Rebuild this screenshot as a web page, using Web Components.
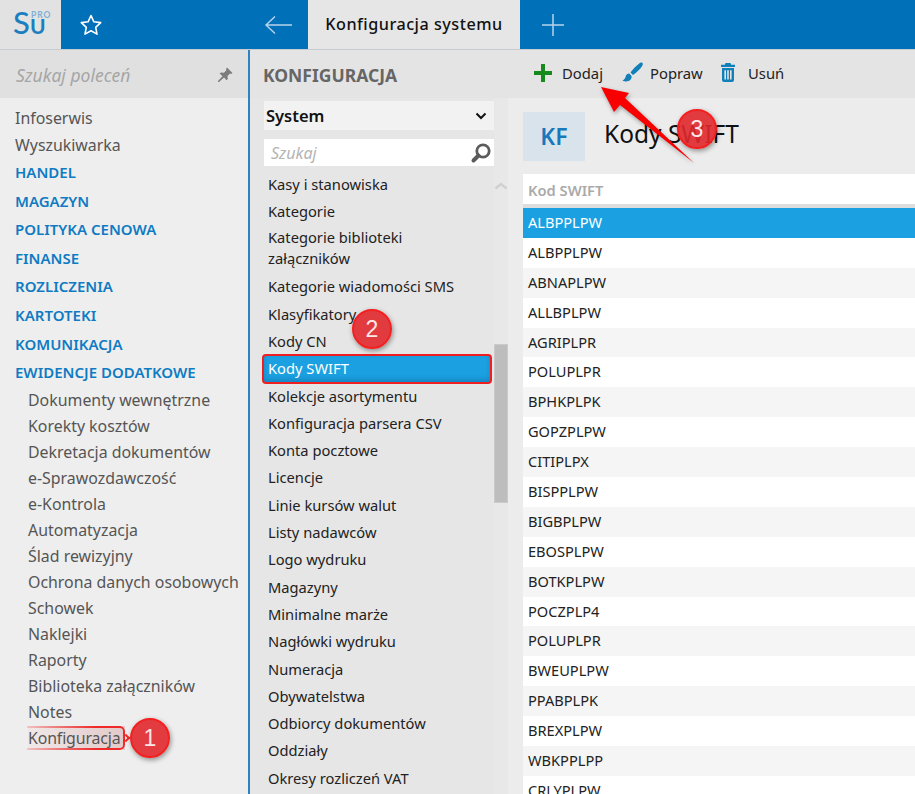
<!DOCTYPE html>
<html lang="pl">
<head>
<meta charset="UTF-8">
<title>Konfiguracja systemu</title>
<style>
    html, body { margin: 0; height: 794px; overflow: hidden; }
    body { font-family: "Noto Sans", "Open Sans", sans-serif; background: #ececec; position: relative; }
    #app { display: grid; grid-template-columns: 250px 258px 1fr; grid-template-rows: 50px 744px; width: 915px; }
    su-topbar { grid-column: 1 / 4; }
</style>
</head>
<body>
<div id="app">
    <su-topbar></su-topbar>
    <su-nav></su-nav>
    <su-config></su-config>
    <su-detail></su-detail>
</div>
<step-badge n="1" style="left:130px;top:718px"></step-badge>
<step-badge n="2" style="left:352px;top:309px"></step-badge>
<step-badge n="3" style="left:677px;top:109px"></step-badge>
<red-arrow></red-arrow>

<template id="topbar-tpl">
    <style>
        :host { display: flex; height: 50px; box-sizing: border-box; border-bottom: 1px solid #c6ccd1; background: #0070b9; }
        .logo { width: 61px; background: #e2e2e2; display: flex; }
        .star { width: 185px; padding-left: 18px; display: flex; align-items: center; }
        .back { width: 28px; display: flex; align-items: center; padding-right: 16px; }
        .tab { width: 212px; background: #e6e6e6; color: #111; font-size: 16.200px; font-weight: 500; letter-spacing: .5px; display: flex; align-items: center; justify-content: center; padding-bottom: 2px; box-sizing: border-box; }
        .plus { padding-left: 22px; display: flex; align-items: center; }
    </style>
    <div class="logo">
        <svg width="61" height="49" viewBox="0 0 61 49">
            <text x="13" y="34" font-family="Lato, sans-serif" font-size="31" font-weight="500" fill="#1b7fc0">S</text>
            <text x="30" y="34" font-family="Lato, sans-serif" font-size="21" font-weight="700" fill="#1b7fc0">U</text>
            <text x="31" y="18" font-family="Lato, sans-serif" font-size="8.500" font-weight="700" letter-spacing=".9" fill="#7db0d4">PRO</text>
        </svg>
    </div>
    <div class="star">
        <svg width="24" height="24" viewBox="0 0 24 24" fill="none" stroke="#fff" stroke-width="1.600" stroke-linejoin="round">
            <path d="M12 2.500l2.900 6.300 6.800.8-5 4.700 1.300 6.800-6-3.400-6 3.400 1.300-6.800-5-4.700 6.800-.8z"/>
        </svg>
    </div>
    <div class="back">
        <svg width="28" height="20" viewBox="0 0 28 20" fill="none" stroke="#b5d3ea" stroke-width="1.500">
            <path d="M28 10H2M11 1.500L2 10l9 8.500"/>
        </svg>
    </div>
    <div class="tab">Konfiguracja systemu</div>
    <div class="plus">
        <svg width="22" height="22" viewBox="0 0 22 22" stroke="#b5d3ea" stroke-width="1.500"><path d="M11 0v22M0 11h22"/></svg>
    </div>
</template>

<template id="nav-tpl">
    <style>
        :host { display: flex; flex-direction: column; background: #eeeeee; border-right: 2px solid #2f82bf; box-sizing: border-box; overflow: hidden; }
        .search { height: 48px; flex: none; background: #e0e0e0; display: flex; align-items: center; justify-content: space-between; padding: 2px 14px 0 16px; box-sizing: border-box; font-style: italic; font-size: 17.500px; color: #a6a6a6; }
        .list { padding-top: 7px; font-size: 15.900px; color: #555; }
        .item { padding-left: 15px; line-height: 26.500px; height: 26.500px; }
        .sec { padding-left: 15px; height: 28.600px; line-height: 28.600px; color: #0f7bc3; font-weight: 600; font-size: 15px; }
        .sub { padding-left: 28px; height: 26px; line-height: 26px; white-space: nowrap; }
        .mark { display: inline-block; position: relative; line-height: 24px; padding-right: 5px; margin-top: 1px; letter-spacing: -.15px;
            background: linear-gradient(90deg, #f0e8e8, #e2c9c9); }
        .mark::before { content: ""; position: absolute; inset: 0 0 0 -1px; border: solid #f02a2a; border-width: 2px 2px 2px 0; border-radius: 0 5px 5px 0;
            -webkit-mask: linear-gradient(90deg, rgba(0,0,0,.2), #000 70%); mask: linear-gradient(90deg, rgba(0,0,0,.2), #000 70%); }
        .mark::after { content: ""; position: absolute; right: -4px; top: 9px; width: 6px; height: 6px; border: solid #f02a2a; border-width: 2px 2px 0 0; transform: rotate(45deg); box-sizing: border-box; }
    </style>
    <div class="search">
        <span>Szukaj poleceń</span>
        <svg width="18" height="18" viewBox="0 0 18 18" fill="#7d7d7d">
            <path d="M11 1.500l5.500 5.500-1.300 1-1.200-.4-2.500 2.500.3 3-1.200 1.200-2.600-2.800L3 16l-1 0 0-1 4.500-4.800-2.800-2.600 1.200-1.200 3 .3 2.500-2.500-.4-1.200z"/>
        </svg>
    </div>
    <div class="list"></div>
</template>

<template id="config-tpl">
    <style>
        :host { display: flex; flex-direction: column; background: #e4e4e4; overflow: hidden; }
        h2 { margin: 0; height: 48px; flex: none; box-sizing: border-box; padding: 2px 0 0 13px; display: flex; align-items: center; font-size: 17.500px; font-weight: 700; color: #666; }
        .body { flex: 1; display: flex; min-height: 0; background: #e6e6e6; }
        .col { width: 244px; flex: none; padding: 3px 0 0 14px; box-sizing: border-box; }
        .select { width: 230px; height: 29px; background: #f2f2f2; display: flex; align-items: center; justify-content: space-between; padding: 0 7px 0 2px; box-sizing: border-box; font-size: 16.500px; font-weight: 600; color: #111; }
        .find { width: 230px; height: 27px; margin-top: 9px; background: #fff; display: flex; align-items: center; justify-content: space-between; padding: 0 2px 0 7px; box-sizing: border-box; font-style: italic; font-size: 16px; color: #b4b4b4; }
        .items { margin: 5px 0 0 -2px; font-size: 14.700px; color: #222; }
        .row { padding-left: 6px; min-height: 27.300px; line-height: 27.300px; white-space: nowrap; }
        .row.two { line-height: 21px; padding: 1.500px 0 4.300px 6px; white-space: normal; width: 190px; }
        .row.on { background: #1ba1e2; color: #fff; width: 230px; box-sizing: border-box; height: 30px; margin: -1.350px 0; padding-left: 4px; line-height: 24px;
            border: 2px solid #f01f1f; border-radius: 4px; box-shadow: inset 0 -3px 5px rgba(0,60,110,.25); position: relative; }
        .bar { width: 14px; flex: none; position: relative; background: #e8e8e8; }
        .bar svg { position: absolute; top: 84px; left: 0; }
        .thumb { position: absolute; left: 0; top: 246px; width: 14px; height: 159px; box-sizing: border-box; background: #bdbdbd; border: 1px solid #cacaca; }
    </style>
    <h2>KONFIGURACJA</h2>
    <div class="body">
        <div class="col">
            <div class="select">System
                <svg width="12" height="8" viewBox="0 0 12 8" fill="none" stroke="#111" stroke-width="2"><path d="M1.500 1.500L6 6l4.500-4.500"/></svg>
            </div>
            <div class="find">Szukaj
                <svg width="22" height="22" viewBox="0 0 22 22" fill="none"><circle cx="13" cy="9" r="6.200" stroke="#5c5c5c" stroke-width="2.800"/><path d="M8.500 13.500L3.500 18.500" stroke="#5c5c5c" stroke-width="4" stroke-linecap="round"/></svg>
            </div>
            <div class="items"></div>
        </div>
        <div class="bar">
            <svg width="14" height="8" viewBox="0 0 14 8" fill="none" stroke="#d0d0d0" stroke-width="2.500"><path d="M1.500 6.500L7 2l5.500 4.500"/></svg>
            <div class="thumb"></div>
        </div>
    </div>
</template>

<template id="detail-tpl">
    <style>
        :host { display: flex; flex-direction: column; background: #ececec; overflow: hidden; min-width: 0; }
        .tools { height: 48px; flex: none; background: #e4e4e4; display: flex; align-items: center; padding: 0 0 3px 26px; box-sizing: border-box; font-size: 14.800px; color: #222; }
        .tools span { display: flex; align-items: center; }
        .head { display: flex; align-items: center; height: 76px; flex: none; padding-left: 15px; }
        .kf { width: 62px; height: 49px; background: #d8e3ec; color: #1878bb; font-size: 23px; font-weight: 600; display: flex; align-items: center; justify-content: center; }
        h1 { margin: 0 0 6px 19px; font-size: 24.500px; font-weight: 400; color: #111; }
        .table { margin-left: 15px; font-size: 14.600px; color: #222; }
        .th { height: 30px; line-height: 33px; background: #fff; padding-left: 5px; color: #aaa; font-weight: 600; font-size: 14.700px; border-bottom: 4px solid #dedede; }
        .tr { height: 29.900px; line-height: 29.500px; padding-left: 5px; background: #fff; }
        .tr:nth-child(odd) { background: #f5f5f5; }
        .tr.on { background: #1ba1e2; color: #fff; }
    </style>
    <div class="tools">
        <span style="width:28px"><svg width="18" height="18" viewBox="0 0 18 18" fill="#178a1e"><path d="M7 0h4v7h7v4h-7v7H7v-7H0V7h7z"/></svg></span>
        <span style="width:60px">Dodaj</span>
        <span style="width:28px"><svg width="21" height="21" viewBox="0 0 21 21" fill="#117fb8"><path d="M20.500 1c-.8-.9-2-.5-3 .2C14 3.800 10.500 7.500 8.500 10.500l2.500 2.500c3-2.200 7-5.500 9-8.800.6-1 1.200-2.300.5-3.200zM7.200 11.500c-2 .2-3.300 1.500-3.600 3.200-.2 1.500-1.200 2.800-3.100 4 2.700 1.200 6.300.8 8-1 1.200-1.300 1.300-2.800.9-3.900z"/></svg></span>
        <span style="width:71px">Popraw</span>
        <span style="width:27px"><svg width="14" height="19" viewBox="0 0 14 19" fill="#117fb8"><path d="M4.500 0h5l.7 1.700H14v2.200H0V1.700h3.800zM1 5h12v12a2 2 0 0 1-2 2H3a2 2 0 0 1-2-2zM3.400 7.200v9.400h1.600V7.200zm2.800 0v9.400h1.600V7.200zm2.800 0v9.400h1.600V7.200z" fill-rule="evenodd"/></svg></span>
        <span>Usuń</span>
    </div>
    <div class="head"><div class="kf">KF</div><h1>Kody SWIFT</h1></div>
    <div class="table"></div>
</template>

<script>
    function mount(el, id) {
        el.attachShadow({ mode: 'open' })
        el.shadowRoot.append(document.getElementById(id).content.cloneNode(true))
        return el.shadowRoot
    }

    class SuTopbar extends HTMLElement {
        connectedCallback() { mount(this, 'topbar-tpl') }
    }

    class SuNav extends HTMLElement {
        connectedCallback() {
            const root = mount(this, 'nav-tpl')
            const top = ['Infoserwis', 'Wyszukiwarka']
            const secs = ['HANDEL', 'MAGAZYN', 'POLITYKA CENOWA', 'FINANSE', 'ROZLICZENIA', 'KARTOTEKI', 'KOMUNIKACJA', 'EWIDENCJE DODATKOWE']
            const subs = ['Dokumenty wewnętrzne', 'Korekty kosztów', 'Dekretacja dokumentów', 'e-Sprawozdawczość', 'e-Kontrola', 'Automatyzacja', 'Ślad rewizyjny', 'Ochrona danych osobowych', 'Schowek', 'Naklejki', 'Raporty', 'Biblioteka załączników', 'Notes']
            let html = top.map(t => `<div class="item">${t}</div>`).join('')
            html += secs.map(t => `<div class="sec">${t}</div>`).join('')
            html += subs.map(t => `<div class="sub">${t}</div>`).join('')
            html += `<div class="sub"><span class="mark">Konfiguracja</span></div>`
            root.querySelector('.list').innerHTML = html
        }
    }

    class SuConfig extends HTMLElement {
        connectedCallback() {
            const root = mount(this, 'config-tpl')
            const rows = ['Kasy i stanowiska', 'Kategorie', 'Kategorie biblioteki załączników', 'Kategorie wiadomości SMS', 'Klasyfikatory', 'Kody CN', 'Kody SWIFT', 'Kolekcje asortymentu', 'Konfiguracja parsera CSV', 'Konta pocztowe', 'Licencje', 'Linie kursów walut', 'Listy nadawców', 'Logo wydruku', 'Magazyny', 'Minimalne marże', 'Nagłówki wydruku', 'Numeracja', 'Obywatelstwa', 'Odbiorcy dokumentów', 'Oddziały', 'Okresy rozliczeń VAT']
            root.querySelector('.items').innerHTML = rows.map(t => {
                let cls = 'row'
                if (t == 'Kody SWIFT') cls += ' on'
                if (t.includes('biblioteki')) cls += ' two'
                return `<div class="${cls}">${t}</div>`
            }).join('')
        }
    }

    class SuDetail extends HTMLElement {
        connectedCallback() {
            const root = mount(this, 'detail-tpl')
            const codes = ['ALBPPLPW', 'ALBPPLPW', 'ABNAPLPW', 'ALLBPLPW', 'AGRIPLPR', 'POLUPLPR', 'BPHKPLPK', 'GOPZPLPW', 'CITIPLPX', 'BISPPLPW', 'BIGBPLPW', 'EBOSPLPW', 'BOTKPLPW', 'POCZPLP4', 'POLUPLPR', 'BWEUPLPW', 'PPABPLPK', 'BREXPLPW', 'WBKPPLPP', 'CRLYPLPW']
            root.querySelector('.table').innerHTML = '<div class="th">Kod SWIFT</div><div>' +
                codes.map((c, i) => `<div class="tr${i == 0 ? ' on' : ''}">${c}</div>`).join('') + '</div>'
        }
    }

    class StepBadge extends HTMLElement {
        connectedCallback() {
            this.attachShadow({ mode: 'open' })
            this.shadowRoot.innerHTML = `<style>
                :host { position: absolute; display: flex; width: 40px; height: 40px; box-sizing: border-box; border-radius: 50%; background: rgba(224,40,44,.9); border: 2px solid #f41f1f;
                    box-shadow: 1px 2px 5px rgba(0,0,0,.4); color: #ffe6e6; font-family: "Liberation Sans", sans-serif; font-size: 23px; align-items: center; justify-content: center; }
            </style>${this.getAttribute('n')}`
        }
    }

    class RedArrow extends HTMLElement {
        connectedCallback() {
            this.attachShadow({ mode: 'open' })
            this.shadowRoot.innerHTML = `<style>
                :host { position: absolute; left: 595px; top: 80px; display: block; width: 105px; height: 90px; }
                svg { display: block; filter: drop-shadow(1px 2px 2px rgba(0,0,0,.35)); }
            </style>
            <svg width="105" height="90" viewBox="595 80 105 90"><polygon points="601,87 629,93 625,98 694,163 620,105 614,112" fill="#f80000"/></svg>`
        }
    }

    customElements.define('su-topbar', SuTopbar)
    customElements.define('su-nav', SuNav)
    customElements.define('su-config', SuConfig)
    customElements.define('su-detail', SuDetail)
    customElements.define('step-badge', StepBadge)
    customElements.define('red-arrow', RedArrow)
</script>
</body>
</html>
